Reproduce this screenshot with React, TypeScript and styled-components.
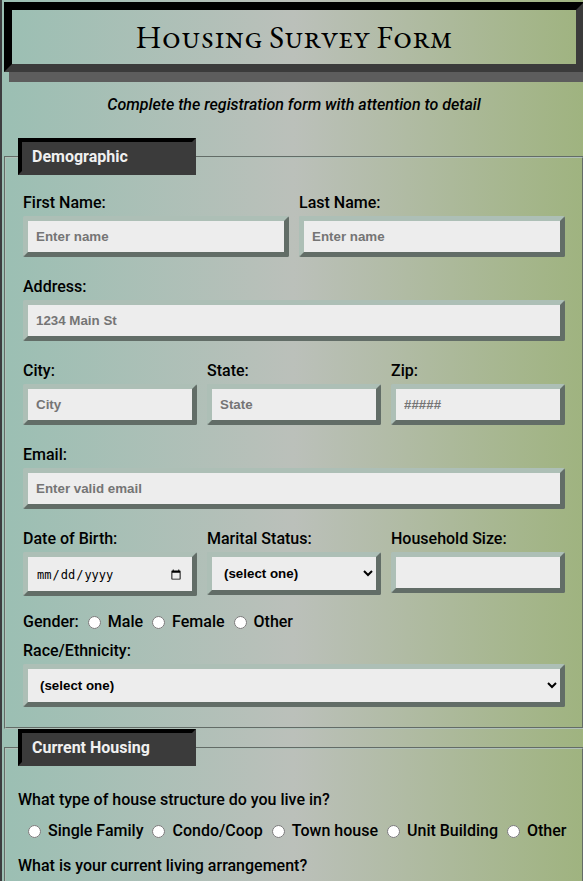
import React from 'react';
import styled, { createGlobalStyle, css } from 'styled-components';

const GlobalStyle = createGlobalStyle`
  *, *::before, *::after { box-sizing: border-box; }
  html { background: #3d3d40; }
  body {
    margin: 0;
    overflow: hidden;
    font-family: Roboto, sans-serif;
    font-size: 16px;
    font-weight: 500;
    line-height: 22px;
    color: #000;
  }
`;

const Page = styled.main`
  height: 100vh;
  margin-left: 2px;
  margin-right: -3px;
  padding: 2px;
  overflow: hidden;
  background: linear-gradient(to right, #9bbfb3, #bbc0ba 50%, #9fb37f);
`;

const Title = styled.h1`
  margin: 0;
  border: 8px solid;
  border-color: #000 #3b3b3b #3b3b3b #000;
  box-shadow: 5px 10px #5d5d5d;
  font-family: 'EB Garamond', 'Liberation Serif', serif;
  font-size: 32px;
  font-weight: 400;
  font-variant: small-caps;
  line-height: 54px;
  text-align: center;
`;

const Intro = styled.p`
  margin: 22px 0;
  font-style: italic;
  text-align: center;
`;

const Section = styled.fieldset`
  min-width: 0;
  margin: 0;
  padding: 0 12px 20px;
  border: 2px groove #b0c0b8;
`;

const SectionTitle = styled.legend`
  width: 178px;
  height: 37px;
  padding: 4px 10px;
  border: 4px solid;
  border-color: #000 #3b3b3b #3b3b3b #000;
  background: #3b3b3b;
  color: #f0f0f0;
  font-weight: 700;
`;

const Rows = styled.div`
  display: flex;
  flex-direction: column;
  gap: 19px;
  padding: 17px 5px 0;
`;

const Row = styled.div<{ $columns?: number }>`
  display: grid;
  grid-template-columns: repeat(${(p) => p.$columns ?? 1}, minmax(0, 1fr));
  align-items: start;
  gap: 10px;
`;

const FieldBox = styled.div`
  display: flex;
  flex-direction: column;
  gap: 2px;
`;

const control = css`
  width: 100%;
  margin: 0;
  border: 5px solid;
  border-color: #adbfb6 #626d67 #626d67 #adbfb6;
  border-radius: 2px;
  background: #ededed;
  color: #000;
  font-family: 'Liberation Sans', Arial, sans-serif;
  font-weight: 700;
`;

const TextInput = styled.input`
  ${control}
  height: 41px;
  padding: 8px;
  &::placeholder { color: #757575; }
`;

const DateInput = styled.input`
  ${control}
  height: 44px;
  padding: 9px 8px 7px;
  font-family: 'DejaVu Sans Mono', monospace;
  font-size: 12px;
  font-weight: 400;
`;

const Select = styled.select`
  ${control}
  height: 43px;
  padding: 8px;
`;

const Choices = styled.div<{ $indent?: boolean }>`
  display: flex;
  align-items: center;
  gap: 9px;
  padding-left: ${(p) => (p.$indent ? 10 : 0)}px;
  white-space: nowrap;
`;

const Choice = styled.label`
  display: flex;
  align-items: center;
  gap: 7px;
`;

const Radio = styled.input`
  width: 13px;
  height: 13px;
  margin: 0;
`;

const GenderRow = styled.div`
  display: flex;
  gap: 9px;
`;

const Group = styled.div`
  display: flex;
  flex-direction: column;
  gap: 7px;
  margin-top: -4px;
`;

const Questions = styled.div`
  display: flex;
  flex-direction: column;
  gap: 13px;
  padding-top: 23px;
`;

const Question = styled.div`
  display: flex;
  flex-direction: column;
  gap: 9px;
`;

interface FieldProps {
  id: string;
  label: string;
  placeholder?: string;
  type?: string;
}

function Field({ id, label, placeholder, type = 'text' }: FieldProps) {
  const Control = type === 'date' ? DateInput : TextInput;
  return (
    <FieldBox>
      <label htmlFor={id}>{label}</label>
      <Control id={id} name={id} type={type} placeholder={placeholder} />
    </FieldBox>
  );
}

function SelectField({ id, label }: { id: string; label: string }) {
  return (
    <FieldBox>
      <label htmlFor={id}>{label}</label>
      <Select id={id} name={id}>
        <option>(select one)</option>
      </Select>
    </FieldBox>
  );
}

function RadioGroup({ name, options, labelledBy, indent }: {
  name: string;
  options: string[];
  labelledBy: string;
  indent?: boolean;
}) {
  return (
    <Choices role="radiogroup" aria-labelledby={labelledBy} $indent={indent}>
      {options.map((option) => (
        <Choice key={option}>
          <Radio type="radio" name={name} value={option} />
          {option}
        </Choice>
      ))}
    </Choices>
  );
}

export default function App() {
  return (
    <>
      <GlobalStyle />
      <Page>
        <Title>Housing Survey Form</Title>
        <Intro>Complete the registration form with attention to detail</Intro>
        <form>
          <Section>
            <SectionTitle>Demographic</SectionTitle>
            <Rows>
              <Row $columns={2}>
                <Field id="first-name" label="First Name:" placeholder="Enter name" />
                <Field id="last-name" label="Last Name:" placeholder="Enter name" />
              </Row>
              <Row>
                <Field id="address" label="Address:" placeholder="1234 Main St" />
              </Row>
              <Row $columns={3}>
                <Field id="city" label="City:" placeholder="City" />
                <Field id="state" label="State:" placeholder="State" />
                <Field id="zip" label="Zip:" placeholder="#####" />
              </Row>
              <Row>
                <Field id="email" label="Email:" type="email" placeholder="Enter valid email" />
              </Row>
              <Row $columns={3}>
                <Field id="birth-date" label="Date of Birth:" type="date" />
                <SelectField id="marital-status" label="Marital Status:" />
                <Field id="household-size" label="Household Size:" type="number" />
              </Row>
              <Group>
                <GenderRow>
                  <span id="gender-label">Gender:</span>
                  <RadioGroup name="gender" labelledBy="gender-label" options={['Male', 'Female', 'Other']} />
                </GenderRow>
                <SelectField id="ethnicity" label="Race/Ethnicity:" />
              </Group>
            </Rows>
          </Section>
          <Section>
            <SectionTitle>Current Housing</SectionTitle>
            <Questions>
              <Question>
                <span id="structure-label">What type of house structure do you live in?</span>
                <RadioGroup
                  name="structure"
                  labelledBy="structure-label"
                  indent
                  options={['Single Family', 'Condo/Coop', 'Town house', 'Unit Building', 'Other']}
                />
              </Question>
              <span>What is your current living arrangement?</span>
            </Questions>
          </Section>
        </form>
      </Page>
    </>
  );
}
